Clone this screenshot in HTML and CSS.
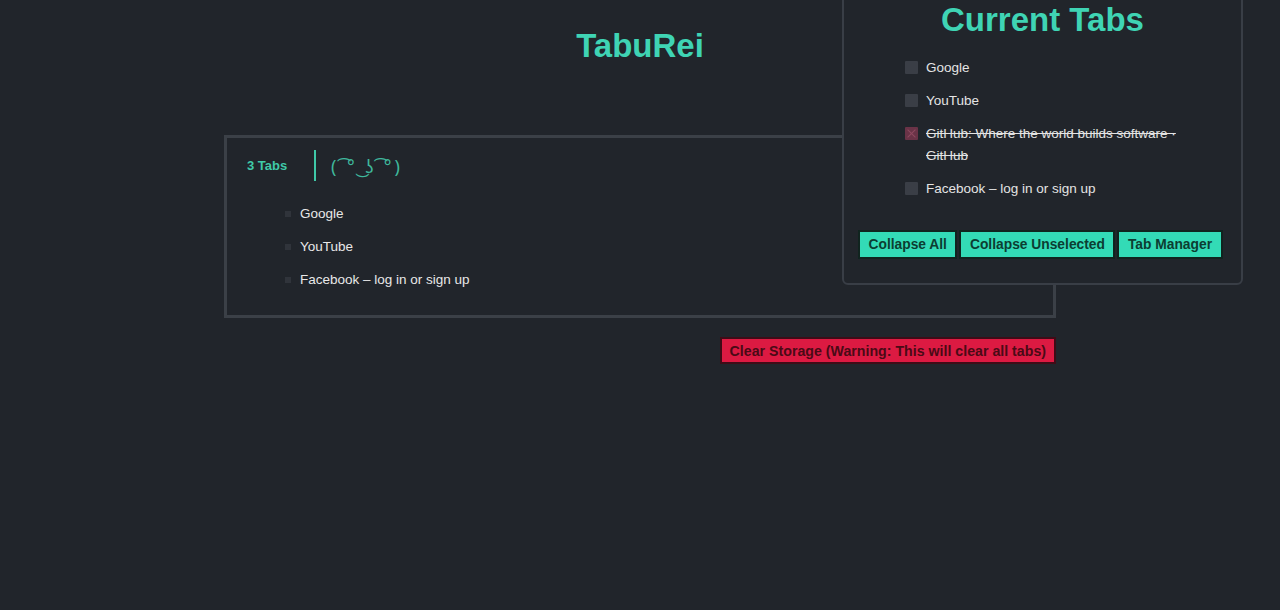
FILE: index.html
```html
<!DOCTYPE html>
<html>
<head>
<meta charset="utf-8">
<title>TabuRei</title>
<link rel="stylesheet" href="styles.css">
</head>
<body>
<main class="page">
  <h1 class="title">TabuRei</h1>
  <section class="group">
    <div class="group-head">
      <span class="count">3 Tabs</span>
      <span class="divider"></span>
      <span class="face">( ͡° ͜ʖ ͡°)</span>
    </div>
    <ul class="tab-list">
      <li>Google</li>
      <li>YouTube</li>
      <li>Facebook – log in or sign up</li>
    </ul>
  </section>
  <div class="actions">
    <button class="danger">Clear Storage (Warning: This will clear all tabs)</button>
  </div>
</main>

<aside class="popup">
  <h2 class="popup-title">Current Tabs</h2>
  <ul class="check-list">
    <li><span class="box"></span><span class="label">Google</span></li>
    <li><span class="box"></span><span class="label">YouTube</span></li>
    <li><span class="box checked"></span><span class="label done">GitHub: Where the world builds software · GitHub</span></li>
    <li><span class="box"></span><span class="label">Facebook – log in or sign up</span></li>
  </ul>
  <div class="btn-row">
    <button class="teal">Collapse All</button>
    <button class="teal">Collapse Unselected</button>
    <button class="teal">Tab Manager</button>
  </div>
</aside>
</body>
</html>
```

FILE: styles.css
```css
* { box-sizing: border-box; }
html, body {
  margin: 0;
  padding: 0;
  background: #21252b;
  height: 100%;
}
body {
  font-family: "Liberation Sans", Arial, sans-serif;
  color: #e6e6e6;
  position: relative;
  overflow: hidden;
}
.page {
  width: 832px;
  margin: 0 auto;
  padding-top: 26px;
}
.title {
  margin: 0;
  text-align: center;
  font-size: 33px;
  line-height: 40px;
  font-weight: bold;
  color: #3fd4b4;
}
.group {
  margin-top: 69px;
  border: 3px solid #3b4047;
  height: 183px;
  padding: 12px 20px 0 20px;
}
.group-head {
  display: flex;
  align-items: center;
  height: 31px;
}
.count {
  font-size: 13px;
  font-weight: bold;
  color: #3fc9a8;
  width: 67px;
}
.divider {
  width: 2px;
  height: 31px;
  background: #3fc9a8;
}
.face {
  margin-left: 15px;
  font-family: "Noto Sans", "DejaVu Sans", sans-serif;
  font-size: 18px;
  color: #3fb89c;
  letter-spacing: 3px;
}
.tab-list {
  list-style: none;
  margin: 16px 0 0 0;
  padding: 0 0 0 36px;
}
.tab-list li {
  position: relative;
  font-size: 13.5px;
  line-height: 33px;
  padding-left: 17px;
  color: #e8e8e8;
}
.tab-list li::before {
  content: "";
  position: absolute;
  left: 2px;
  top: 14px;
  width: 6px;
  height: 6px;
  background: #30343b;
}
.actions {
  display: flex;
  justify-content: flex-end;
  margin-top: 19px;
}
button {
  font-family: "Liberation Sans", Arial, sans-serif;
  font-weight: bold;
  cursor: pointer;
  white-space: nowrap;
}
.danger {
  background: #dc1a42;
  color: #4a0a16;
  border: 2px solid #3e0c17;
  height: 27px;
  padding: 0 8px;
  font-size: 14.2px;
}
.popup {
  position: absolute;
  top: -12px;
  right: 37px;
  width: 401px;
  height: 297px;
  border: 2px solid #393e46;
  border-radius: 6px;
  background: #21252b;
  padding: 10px 14px 0 14px;
}
.popup-title {
  margin: 0;
  text-align: center;
  font-size: 33px;
  line-height: 40px;
  font-weight: bold;
  color: #3fd4b4;
}
.check-list {
  list-style: none;
  margin: 17px 0 0 0;
  padding: 0 0 0 47px;
}
.check-list li {
  display: flex;
  align-items: flex-start;
  margin-bottom: 11px;
}
.box {
  flex: none;
  width: 13px;
  height: 13px;
  margin-top: 4px;
  background: #3a3e46;
  border-radius: 1px;
  position: relative;
}
.box.checked {
  background: #6a3347;
}
.box.checked::before,
.box.checked::after {
  content: "";
  position: absolute;
  left: 1px;
  top: 6px;
  width: 11px;
  height: 1px;
  background: #8e4a60;
  transform: rotate(45deg);
}
.box.checked::after { transform: rotate(-45deg); }
.label {
  margin-left: 8px;
  font-size: 13.5px;
  line-height: 22px;
  width: 254px;
  color: #e4e4e4;
}
.label.done {
  text-decoration: line-through;
}
.btn-row {
  display: flex;
  gap: 2px;
  margin-top: 30px;
}
.teal {
  flex: none;
  background: #33dbb6;
  color: #0c3d32;
  border: 2px solid #10241f;
  height: 29px;
  padding: 0 8.5px;
  font-size: 13.8px;
}
```
